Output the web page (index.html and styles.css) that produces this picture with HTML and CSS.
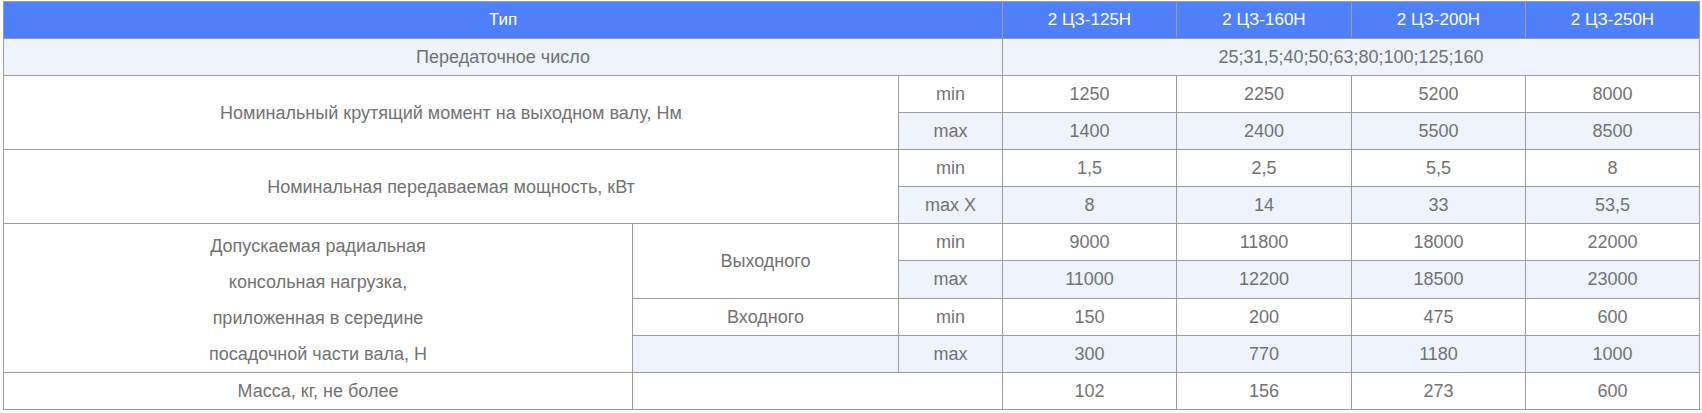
FILE: index.html
```html
<!DOCTYPE html>
<html lang="ru">
<head>
<meta charset="utf-8">
<title>Характеристики</title>
<link rel="stylesheet" href="styles.css">
</head>
<body>
<div class="wrap">
<table class="spec">
<colgroup>
<col class="c1"><col class="c2"><col class="c3">
<col class="c4"><col class="c5"><col class="c6"><col class="c7">
</colgroup>
<tbody>
<tr class="head"><th colspan="3">Тип</th><th>2 ЦЗ-125Н</th><th>2 ЦЗ-160Н</th><th>2 ЦЗ-200Н</th><th>2 ЦЗ-250Н</th></tr>
<tr><td colspan="3">Передаточное число</td><td colspan="4">25;31,5;40;50;63;80;100;125;160</td></tr>
<tr><td colspan="2" rowspan="2">Номинальный крутящий момент на выходном валу, Нм</td><td>min</td><td>1250</td><td>2250</td><td>5200</td><td>8000</td></tr>
<tr><td>max</td><td>1400</td><td>2400</td><td>5500</td><td>8500</td></tr>
<tr><td colspan="2" rowspan="2">Номинальная передаваемая мощность, кВт</td><td>min</td><td>1,5</td><td>2,5</td><td>5,5</td><td>8</td></tr>
<tr><td>max X</td><td>8</td><td>14</td><td>33</td><td>53,5</td></tr>
<tr><td rowspan="4" class="multi">Допускаемая радиальная<br>консольная нагрузка,<br>приложенная в середине<br>посадочной части вала, Н</td><td rowspan="2">Выходного</td><td>min</td><td>9000</td><td>11800</td><td>18000</td><td>22000</td></tr>
<tr><td>max</td><td>11000</td><td>12200</td><td>18500</td><td>23000</td></tr>
<tr><td>Входного</td><td>min</td><td>150</td><td>200</td><td>475</td><td>600</td></tr>
<tr><td></td><td>max</td><td>300</td><td>770</td><td>1180</td><td>1000</td></tr>
<tr><td>Масса, кг, не более</td><td colspan="2"></td><td>102</td><td>156</td><td>273</td><td>600</td></tr>
</tbody>
</table>
</div>
</body>
</html>
```

FILE: styles.css
```css
html, body {
  margin: 0;
  padding: 0;
  background: #ffffff;
}
.wrap {
  padding: 1px 3px 0 3px;
}
.spec {
  border-collapse: collapse;
  table-layout: fixed;
  width: 1697px;
  font-family: "Liberation Sans", Arial, sans-serif;
  font-size: 18px;
  color: #727272;
}
.c1 { width: 629px; }
.c2 { width: 266px; }
.c3 { width: 104px; }
.c4 { width: 174px; }
.c5 { width: 175px; }
.c6 { width: 174px; }
.c7 { width: 174px; }
.spec tr {
  height: 37px;
}
.spec th,
.spec td {
  border: 1px solid #9c9c9c;
  padding: 0;
  text-align: center;
  vertical-align: middle;
  font-weight: normal;
  line-height: 22px;
}
.spec .head th {
  background: #4f80f9;
  color: #ffffff;
  font-size: 17px;
}
.spec tr:nth-child(even) td {
  background: #eef3fe;
}
.spec td.multi {
  line-height: 36px;
  padding-top: 4px;
  background: #ffffff;
}
```
